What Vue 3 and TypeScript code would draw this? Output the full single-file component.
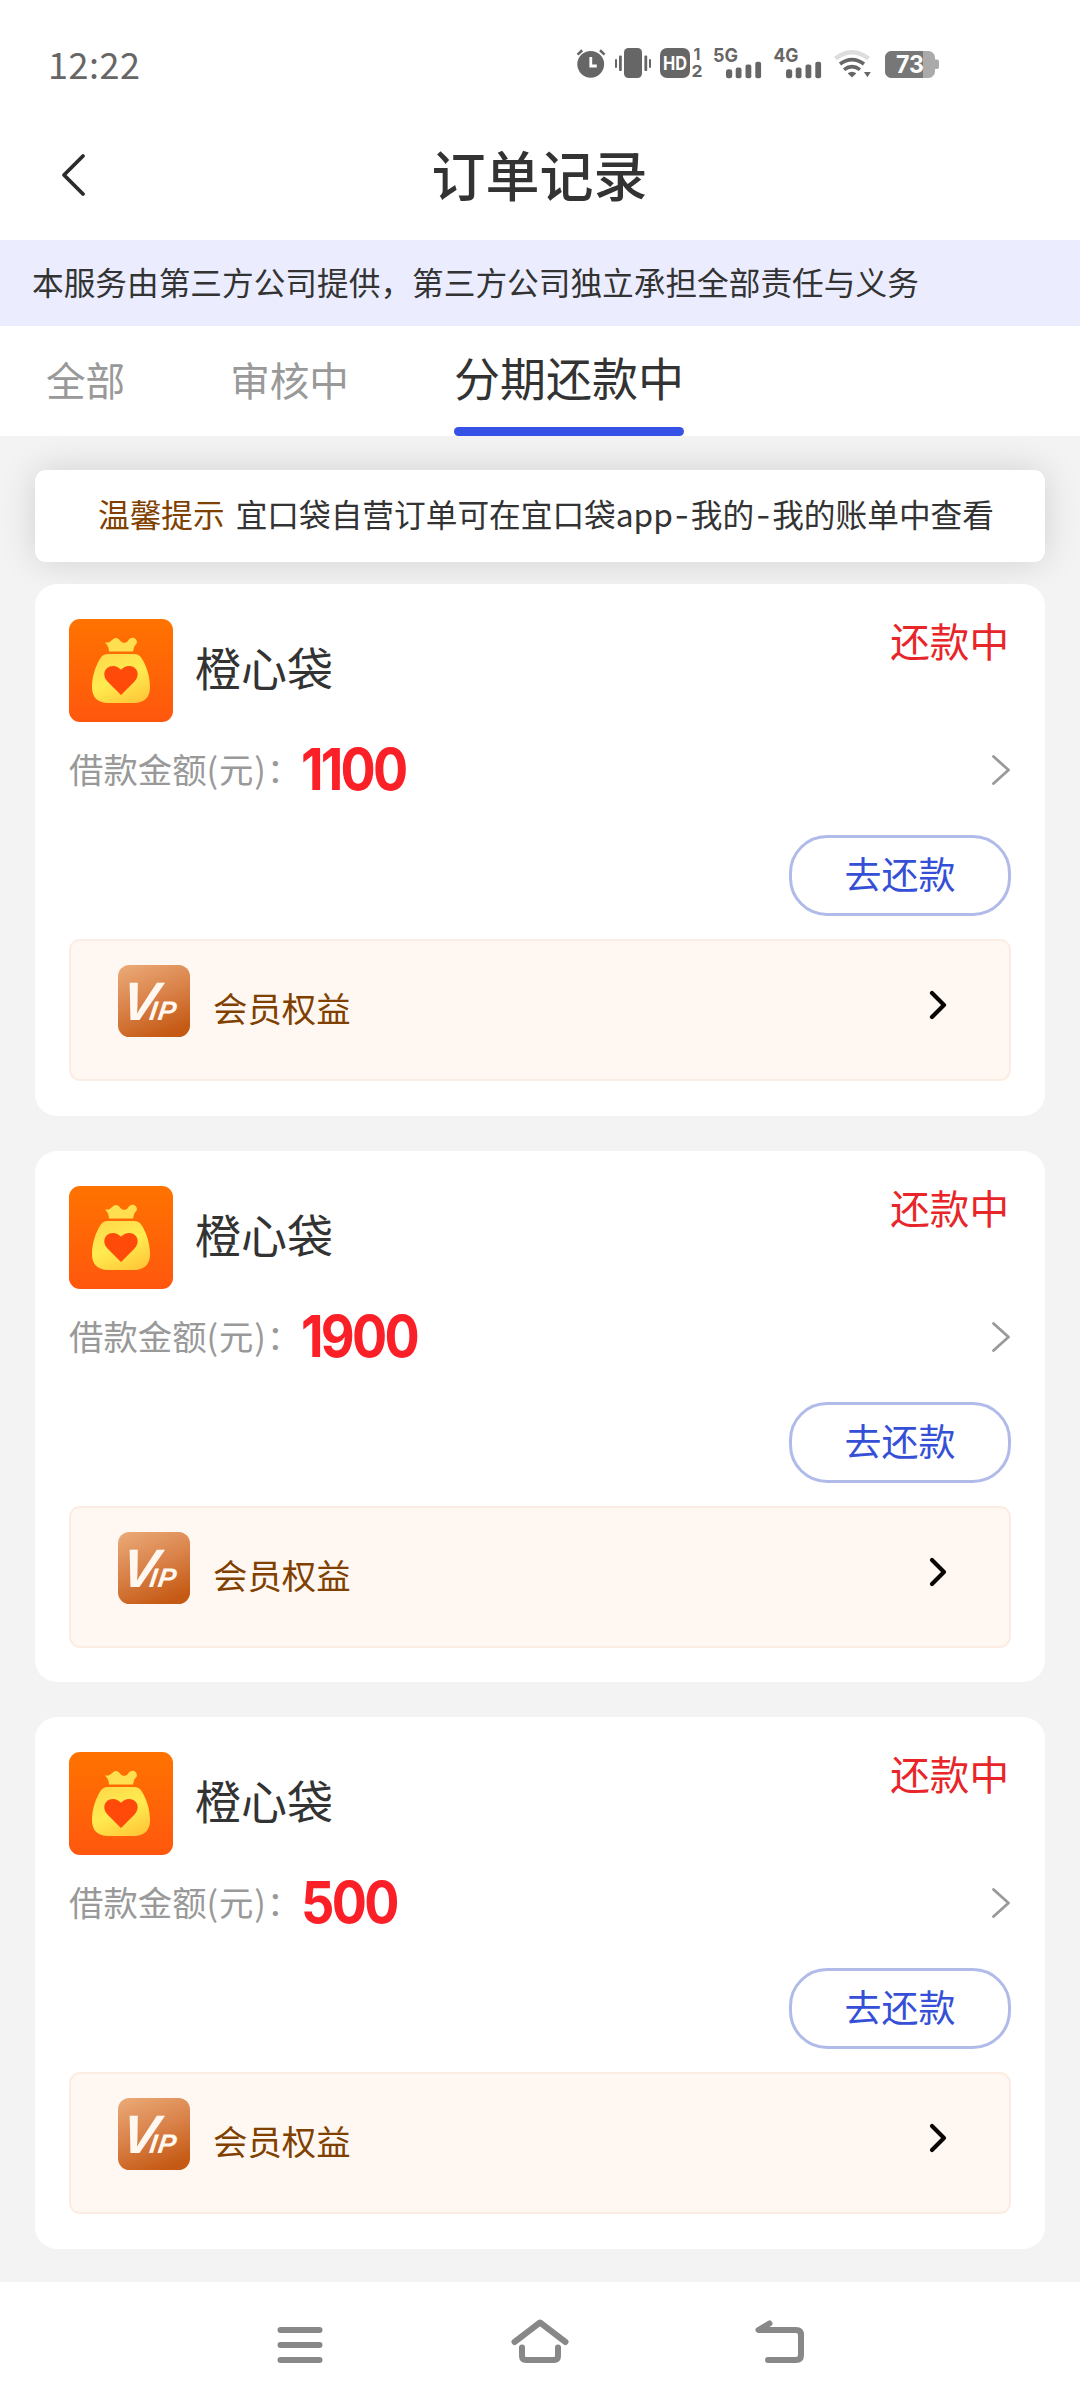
<script setup lang="ts">
interface Order {
  id: number
  name: string
  status: string
  amount: string
}

const tabs: { label: string; active: boolean }[] = [
  { label: '全部', active: false },
  { label: '审核中', active: false },
  { label: '分期还款中', active: true },
]

const orders: Order[] = [
  { id: 1, name: '橙心袋', status: '还款中', amount: '1100' },
  { id: 2, name: '橙心袋', status: '还款中', amount: '1900' },
  { id: 3, name: '橙心袋', status: '还款中', amount: '500' },
]
</script>

<template>
  <div class="screen">
    <header class="status-bar">
      <span class="clock">12:22</span>
      <svg class="status-icons" viewBox="0 0 400 70" width="400" height="70">
        <g fill="#666">
          <circle cx="30.7" cy="34.3" r="13.4" />
          <path d="M17.6 24.6l4.6-4.3M44.6 24.6l-4.6-4.3" stroke="#666" stroke-width="2.6" />
          <path d="M30.8 27v9h6" fill="none" stroke="#fff" stroke-width="2.8" />
          <rect x="64" y="18" width="18" height="30" rx="4.5" />
          <rect x="59" y="25.5" width="2.8" height="15.5" rx="1" />
          <rect x="55" y="29" width="2" height="9" rx="1" />
          <rect x="84.4" y="25.5" width="2.8" height="15.5" rx="1" />
          <rect x="89" y="29" width="2" height="9" rx="1" />
          <rect x="100" y="18" width="30" height="30" rx="7" />
          <rect x="166" y="39.3" width="6.2" height="9" rx="2.4" />
          <rect x="175.7" y="37.6" width="5.8" height="10.7" rx="2" />
          <rect x="185.5" y="34.6" width="5.8" height="13.7" rx="2" />
          <rect x="195.3" y="31.8" width="5.8" height="16.5" rx="2" />
          <rect x="226" y="39.3" width="6.2" height="9" rx="2.4" />
          <rect x="235.7" y="37.6" width="5.8" height="10.7" rx="2" />
          <rect x="245.5" y="34.6" width="5.8" height="13.7" rx="2" />
          <rect x="255.3" y="31.8" width="5.8" height="16.5" rx="2" />
          <path d="M287.6 43.2q4.4-3 8.800 0l-4.400 4.300z" />
          <path d="M304 42h6.800l-3.400 5.200z" />
        </g>
        <g class="glyphs">
          <text x="103" y="39.800" font-size="18.500" fill="#fff" textLength="24" lengthAdjust="spacingAndGlyphs">HD</text>
          <text x="133.500" y="30" font-size="16" fill="#666">1</text>
          <text x="131.500" y="47" font-size="16" fill="#666" textLength="11" lengthAdjust="spacingAndGlyphs">2</text>
          <text x="153" y="32" font-size="19" fill="#666" textLength="25" lengthAdjust="spacingAndGlyphs">5G</text>
          <text x="213.500" y="32" font-size="19" fill="#666" textLength="25" lengthAdjust="spacingAndGlyphs">4G</text>
        </g>
        <g fill="none">
          <path d="M275.500 28.500q16.500-12.500 33 0" stroke="#ddd" stroke-width="4.200" />
          <path d="M280 34q12-8.800 24 0" stroke="#666" stroke-width="3.600" />
          <path d="M284 39.600q8-5.800 16 0" stroke="#666" stroke-width="3.600" />
        </g>
        <rect x="325" y="21" width="50" height="27" rx="6.500" fill="#aaa" />
        <path d="M374 29.500h3q2 0 2 2v5.500q0 2-2 2h-3z" fill="#aaa" />
        <path d="M331.500 21H363v27h-31.500a6.500 6.500 0 0 1-6.500-6.500v-14a6.500 6.500 0 0 1 6.500-6.500z" fill="#777" />
        <text class="glyphs" x="336" y="43.400" font-size="24" fill="#fff" textLength="28" lengthAdjust="spacingAndGlyphs">73</text>
      </svg>
    </header>

    <nav class="title-bar">
      <svg class="back" viewBox="0 0 30 48" width="30" height="48">
        <path d="M25 5L6 24l19 19" fill="none" stroke="#2b2b2b" stroke-width="3.800" stroke-linecap="round" stroke-linejoin="round" />
      </svg>
      <h1>订单记录</h1>
    </nav>

    <p class="notice">本服务由第三方公司提供，第三方公司独立承担全部责任与义务</p>

    <div class="tabs">
      <span v-for="tab in tabs" :key="tab.label" class="tab" :class="{ active: tab.active }">{{ tab.label }}</span>
    </div>

    <main class="content">
      <div class="tip">
        <span class="tip-title">温馨提示</span>
        <span class="tip-text">宜口袋自营订单可在宜口袋<span class="latin">app</span><span class="dash">-</span>我的<span class="dash">-</span>我的账单中查看</span>
      </div>

      <section v-for="order in orders" :key="order.id" class="card">
        <div class="head">
          <svg class="logo" viewBox="0 0 104 103" width="104" height="103">
            <defs>
              <linearGradient id="logoBg" x1="0" y1="0" x2="0" y2="1">
                <stop offset="0" stop-color="#ff7300" />
                <stop offset="1" stop-color="#ff570e" />
              </linearGradient>
              <linearGradient id="bag" x1="0.200" y1="0" x2="0.700" y2="1">
                <stop offset="0" stop-color="#ffd94a" />
                <stop offset="0.500" stop-color="#ffec50" />
                <stop offset="1" stop-color="#ffc93a" />
              </linearGradient>
            </defs>
            <rect width="104" height="103" rx="11" fill="url(#logoBg)" />
            <path d="M36 23.500c4 .5 5.500-1 8-3.300 2.500-2.200 5.500-1.200 7 1.300 2.500 3 6 3 8 .2 2-3.700 6-4 8-1.200 1.800 3 .6 4.600-1.200 6.200-1 1-1 3.300-1.800 5.800H40c-.2-3.500-1-6-4-9z" fill="#ffdf50" />
            <path d="M39 35h26q5 0 7.500 4C77 46 81 57 81 68q0 15.500-16 16H39q-16-.5-16-16c0-11 4-22 8.500-29q2.500-4 7.500-4z" fill="url(#bag)" />
            <path d="M52 76L38.500 62.500C33.500 57 34.500 50 40.500 47.500c4.500-1.500 8.500 0 11.500 3.200 3-3.200 7-4.700 11.500-3.200 6 2.500 7 9.500 2 15z" fill="#ff4a0a" />
          </svg>
          <h2>{{ order.name }}</h2>
          <span class="status">{{ order.status }}</span>
        </div>

        <div class="amount-row">
          <span class="label">借款金额<span class="unit">(元)</span>：</span>
          <strong class="amount">{{ order.amount }}</strong>
          <svg class="more" viewBox="0 0 20 34" width="20" height="34">
            <path d="M2.500 3.500L17.500 17 2.500 30.500" fill="none" stroke="#999" stroke-width="2.800" stroke-linecap="round" stroke-linejoin="round" />
          </svg>
        </div>

        <button class="pay" type="button">去还款</button>

        <div class="vip">
          <svg class="vip-icon" viewBox="0 0 72 72" width="72" height="72">
            <defs>
              <linearGradient id="vipBg" x1="0.200" y1="0" x2="0.600" y2="1">
                <stop offset="0" stop-color="#e9a673" />
                <stop offset="0.500" stop-color="#d98148" />
                <stop offset="1" stop-color="#c55a14" />
              </linearGradient>
            </defs>
            <rect width="72" height="72" rx="11.500" fill="url(#vipBg)" />
            <text class="vip-mark" transform="translate(2 55) skewX(-8)"><tspan font-size="54">V</tspan><tspan font-size="27" dx="-7.500">I</tspan><tspan font-size="27" dx="1">P</tspan></text>
          </svg>
          <span class="vip-text">会员权益</span>
          <svg class="vip-more" viewBox="0 0 20 30" width="20" height="30">
            <path d="M3 3l12 12L3 27" fill="none" stroke="#0a0604" stroke-width="4.200" stroke-linecap="round" stroke-linejoin="round" />
          </svg>
        </div>
      </section>
    </main>

    <footer class="sys-nav">
      <svg viewBox="0 0 60 60" width="60" height="60">
        <path d="M10.500 17h39M10.500 32h39M10.500 47h39" />
      </svg>
      <svg viewBox="0 0 60 60" width="60" height="60">
        <path d="M4.500 29L30 9.500 55.500 29M12 34.500V43q0 4 4 4h28q4 0 4-4v-8.500" />
      </svg>
      <svg viewBox="0 0 60 60" width="60" height="60">
        <path d="M19.500 10.500L8.500 17H46q5 0 5 5v20q0 5-5 5H18" />
      </svg>
    </footer>
  </div>
</template>

<style>
body {
  background: #fff;
}
</style>

<style scoped>
.screen {
  width: 1080px;
  height: 2408px;
  overflow: hidden;
  display: flex;
  flex-direction: column;
  background: #fff;
  color: #333;
  font-family: 'Noto Sans CJK SC', 'Noto Sans', sans-serif;
}

h1,
h2,
p {
  margin: 0;
  font-weight: 400;
}

.status-bar {
  height: 130px;
  flex: none;
  display: flex;
  align-items: flex-start;
}

.clock {
  width: 512px;
  padding-left: 48px;
  line-height: 70px;
  margin-top: 28px;
  font-size: 36px;
  letter-spacing: 0.5px;
  color: #666;
}

.status-icons {
  margin-top: 30px;
}

.glyphs {
  font-family: Inter, sans-serif;
  font-weight: 700;
}

.title-bar {
  height: 110px;
  flex: none;
  display: flex;
  align-items: center;
}

.back {
  margin: -20px 0 0 58px;
}

h1 {
  flex: 1;
  margin: -22px 89px 0 0;
  text-align: center;
  font-size: 54px;
  line-height: 80px;
  font-weight: 500;
}

.notice {
  height: 86px;
  flex: none;
  padding-left: 32px;
  background: #ebedfe;
  font-size: 31.680px;
  line-height: 83px;
  white-space: nowrap;
}

.tabs {
  height: 110px;
  flex: none;
  display: flex;
  gap: 105px;
  padding-left: 46px;
}

.tab {
  font-size: 39.600px;
  line-height: 106px;
  color: #999;
  white-space: nowrap;
}

.tab.active {
  display: flex;
  flex-direction: column;
  font-size: 46px;
  line-height: 101px;
  color: #333;
}

.tab.active::after {
  content: '';
  height: 9px;
  border-radius: 4.500px;
  background: #3651e6;
}

.content {
  height: 1846px;
  flex: none;
  box-sizing: border-box;
  padding: 34px 35px 0;
  background: #f3f3f3;
  overflow: hidden;
}

.tip {
  height: 92px;
  box-sizing: border-box;
  display: flex;
  padding-left: 63px;
  gap: 11px;
  border-radius: 11px;
  background: #fff;
  box-shadow: 0 0 36px rgba(0, 0, 0, 0.140);
  font-size: 31.680px;
  line-height: 87px;
  white-space: nowrap;
}

.tip-title {
  color: #804000;
}

.dash {
  display: inline-block;
  width: 18px;
  text-align: center;
  font-family: Inter, sans-serif;
  line-height: 1;
}

.card {
  height: 531.600px;
  box-sizing: border-box;
  margin-top: 35px;
  padding: 35px 34px 0;
  border-radius: 22px;
  background: #fff;
}

.tip + .card {
  position: relative;
  margin-top: 22px;
}

.head {
  display: flex;
  height: 103px;
}

h2 {
  margin-left: 22px;
  font-size: 46px;
  line-height: 94px;
}

.status {
  margin-left: auto;
  padding-right: 2px;
  font-size: 39.600px;
  line-height: 42px;
  color: #e82529;
}

.amount-row {
  display: flex;
  align-items: center;
  height: 94px;
}

.label {
  width: 232px;
  font-size: 34.400px;
  line-height: 92px;
  margin-top: -2px;
  color: #999;
  white-space: nowrap;
}

.unit {
  letter-spacing: 0.8px;
}

.amount {
  font-family: Inter, sans-serif;
  font-size: 58px;
  line-height: 94px;
  font-weight: 700;
  letter-spacing: -3px;
  color: #fb2027;
  transform: scaleX(0.9);
  transform-origin: left;
}

.more {
  margin: 2px 0 0 auto;
}

.pay {
  display: block;
  width: 222px;
  height: 81px;
  box-sizing: border-box;
  margin: 19px 0 0 auto;
  padding: 0 0 5px;
  border: 3px solid #b0bbea;
  border-radius: 38px;
  background: #fff;
  color: #354fd6;
  font-family: inherit;
  font-size: 37px;
  line-height: 70px;
}

.vip {
  display: flex;
  height: 142px;
  box-sizing: border-box;
  margin-top: 23px;
  padding: 24px 60px 0 47px;
  border: 2px solid #fbede3;
  border-radius: 11px;
  background: #fff8f2;
}

.vip-text {
  flex: 1;
  margin-left: 23px;
  font-size: 34.400px;
  line-height: 84px;
  color: #804000;
}

.vip-mark {
  font-family: 'Liberation Sans', sans-serif;
  font-weight: 700;
  font-style: italic;
  fill: #fff8f0;
}

.vip-more {
  margin-top: 25px;
}

.sys-nav {
  height: 126px;
  flex: none;
  display: flex;
  justify-content: center;
  gap: 180px;
  padding-top: 31px;
  box-sizing: border-box;
  background: #fff;
}

.sys-nav path {
  fill: none;
  stroke: #888;
  stroke-width: 6;
  stroke-linecap: round;
  stroke-linejoin: round;
}
</style>
